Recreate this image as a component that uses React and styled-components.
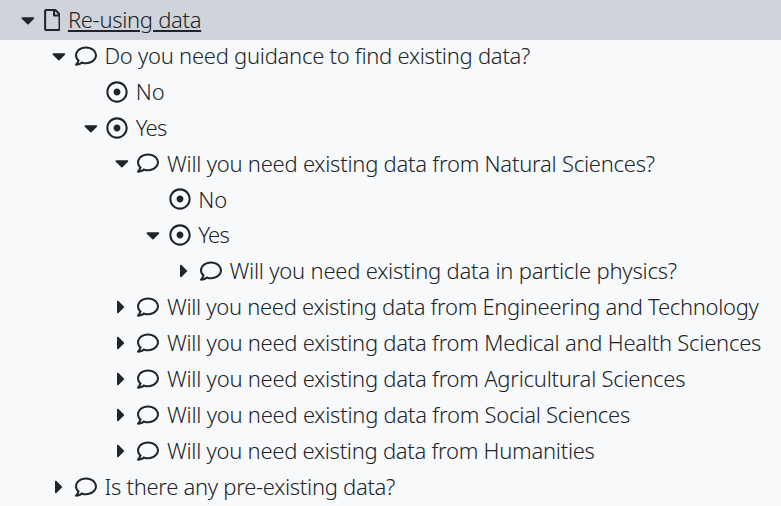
import React from "react";
import styled, { createGlobalStyle } from "styled-components";
import { FaCaretDown, FaCaretRight, FaRegComment, FaRegDotCircle, FaRegFile } from "react-icons/fa";

const GlobalStyle = createGlobalStyle`
  body {
    margin: 0;
    background: #f8f9fb;
    color: #212529;
    font-family: "Noto Sans", "Open Sans", sans-serif;
    font-size: 22px;
    font-weight: 360;
    overflow: hidden;
  }
`;

const Tree = styled.main`
  height: 506px;
  overflow: hidden;
  background: #f8f9fb;
`;

const Row = styled.div`
  display: flex;
  align-items: center;
  box-sizing: border-box;
  height: ${(p) => (p.$active ? "40px" : "35.92px")};
  padding-left: ${(p) => 21.8 + p.$level * 31.25}px;
  padding-bottom: ${(p) => (p.$active ? 0 : 4.5)}px;
  background: ${(p) => (p.$active ? "#ced4da" : "transparent")};
`;

const Caret = styled.span`
  display: flex;
  flex: none;
  width: 21.8px;

  svg {
    width: ${(p) => (p.$open ? 13.8 : 8.2)}px;
    height: 22px;
    margin-left: ${(p) => (p.$open ? -0.6 : 1.9)}px;
  }
`;

const Icon = styled.span`
  display: flex;
  flex: none;
  width: ${(p) => (p.$file ? 16.7 : 22)}px;
  margin-right: 7.6px;

  svg {
    width: 100%;
    height: 22px;
  }
`;

const Label = styled.span`
  white-space: nowrap;
  line-height: 32px;
  padding-bottom: 1.6px;
  letter-spacing: ${(p) => p.$tracking}px;
  text-decoration: ${(p) => (p.$active ? "underline" : "none")};
  text-decoration-thickness: 2px;
  text-underline-offset: 2px;
`;

const icons = { file: FaRegFile, comment: FaRegComment, dot: FaRegDotCircle };

const items = [
  { level: 0, open: true, icon: "file", text: "Re-using data", active: true, tracking: -0.3 },
  { level: 1, open: true, icon: "comment", text: "Do you need guidance to find existing data?", tracking: -0.265 },
  { level: 2, icon: "dot", text: "No", tracking: 0 },
  { level: 2, open: true, icon: "dot", text: "Yes", tracking: -0.8 },
  { level: 3, open: true, icon: "comment", text: "Will you need existing data from Natural Sciences?", tracking: -0.24 },
  { level: 4, icon: "dot", text: "No", tracking: 0 },
  { level: 4, open: true, icon: "dot", text: "Yes", tracking: -0.8 },
  { level: 5, open: false, icon: "comment", text: "Will you need existing data in particle physics?", tracking: -0.22 },
  { level: 3, open: false, icon: "comment", text: "Will you need existing data from Engineering and Technology", tracking: -0.305 },
  { level: 3, open: false, icon: "comment", text: "Will you need existing data from Medical and Health Sciences", tracking: -0.25 },
  { level: 3, open: false, icon: "comment", text: "Will you need existing data from Agricultural Sciences", tracking: -0.25 },
  { level: 3, open: false, icon: "comment", text: "Will you need existing data from Social Sciences", tracking: -0.24 },
  { level: 3, open: false, icon: "comment", text: "Will you need existing data from Humanities", tracking: -0.27 },
  { level: 1, open: false, icon: "comment", text: "Is there any pre-existing data?", tracking: -0.29 },
];

export default function App() {
  return (
    <>
      <GlobalStyle />
      <Tree>
        {items.map((item, i) => {
          const Glyph = icons[item.icon];
          return (
            <Row key={i} $level={item.level} $active={item.active}>
              <Caret $open={item.open}>
                {item.open === true && <FaCaretDown />}
                {item.open === false && <FaCaretRight />}
              </Caret>
              <Icon $file={item.icon === "file"}>
                <Glyph />
              </Icon>
              <Label $active={item.active} $tracking={item.tracking}>{item.text}</Label>
            </Row>
          );
        })}
      </Tree>
    </>
  );
}
